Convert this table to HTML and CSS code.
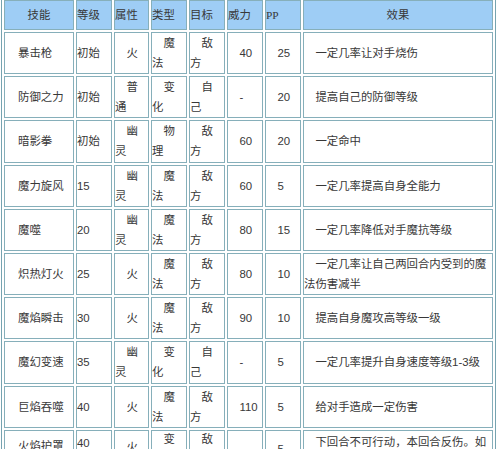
FILE: index.html
```html
<!DOCTYPE html>
<html lang="zh-CN">
<head>
<meta charset="utf-8">
<title>技能表</title>
<link rel="stylesheet" href="styles.css">
</head>
<body>
<table class="skills">
  <thead>
    <tr class="head">
      <th class="c-name center">技能</th>
      <th class="c-lv">等级</th>
      <th class="c-attr">属性</th>
      <th class="c-type">类型</th>
      <th class="c-target">目标</th>
      <th class="c-power">威力</th>
      <th class="c-pp latin">PP</th>
      <th class="c-effect center">效果</th>
    </tr>
  </thead>
  <tbody>
    <tr>
      <td class="name">暴击枪</td><td class="lv">初始</td><td>火</td><td>魔法</td><td>敌方</td><td>40</td><td>25</td><td>一定几率让对手烧伤</td>
    </tr>
    <tr>
      <td class="name">防御之力</td><td class="lv">初始</td><td>普通</td><td>变化</td><td>自己</td><td>-</td><td>20</td><td>提高自己的防御等级</td>
    </tr>
    <tr>
      <td class="name">暗影拳</td><td class="lv">初始</td><td>幽灵</td><td>物理</td><td>敌方</td><td>60</td><td>20</td><td>一定命中</td>
    </tr>
    <tr>
      <td class="name">魔力旋风</td><td class="lv">15</td><td>幽灵</td><td>魔法</td><td>敌方</td><td>60</td><td>5</td><td>一定几率提高自身全能力</td>
    </tr>
    <tr>
      <td class="name">魔噬</td><td class="lv">20</td><td>幽灵</td><td>魔法</td><td>敌方</td><td>80</td><td>15</td><td>一定几率降低对手魔抗等级</td>
    </tr>
    <tr>
      <td class="name">炽热灯火</td><td class="lv">25</td><td>火</td><td>魔法</td><td>敌方</td><td>80</td><td>10</td><td>一定几率让自己两回合内受到的魔法伤害减半</td>
    </tr>
    <tr>
      <td class="name">魔焰瞬击</td><td class="lv">30</td><td>火</td><td>魔法</td><td>敌方</td><td>90</td><td>10</td><td>提高自身魔攻高等级一级</td>
    </tr>
    <tr>
      <td class="name">魔幻变速</td><td class="lv">35</td><td>幽灵</td><td>变化</td><td>自己</td><td>-</td><td>5</td><td>一定几率提升自身速度等级1-3级</td>
    </tr>
    <tr>
      <td class="name">巨焰吞噬</td><td class="lv">40</td><td>火</td><td>魔法</td><td>敌方</td><td>110</td><td>5</td><td>给对手造成一定伤害</td>
    </tr>
    <tr class="last">
      <td class="name p5">火焰护罩</td><td class="lv p2">40</td><td class="p6">火</td><td class="tight">变化</td><td class="tight">敌方</td><td class="p10">-</td><td class="p8">5</td><td class="p1">下回合不可行动，本回合反伤。如</td>
    </tr>
  </tbody>
</table>
</body>
</html>
```

FILE: styles.css
```css
html, body {
  margin: 0;
  padding: 0;
  background: #ffffff;
}

body {
  font-family: "Liberation Sans", "Noto Sans CJK SC", sans-serif;
  font-size: 11.4px;
  color: #383838;
}

.skills {
  table-layout: fixed;
  width: 495px;
  margin: -3px 0 0 1px;
  border: 1px solid #76a3b0;
  border-spacing: 2px;
  background: #ffffff;
}

.skills th,
.skills td {
  box-sizing: border-box;
  border: 1px solid #86afba;
  padding: 0;
  line-height: 20px;
  text-align: left;
  vertical-align: middle;
  font-weight: normal;
  text-indent: 1em;
  overflow: hidden;
}

.skills th {
  background: #9ecdf5;
  text-indent: 0;
}

.skills th.center {
  text-align: center;
}

.skills th.latin {
  font-family: "Liberation Serif", serif;
}

.skills .head {
  height: 30px;
}

.skills tbody tr {
  height: 42.2px;
}

.c-name { width: 70px; }
.c-lv { width: 36px; }
.c-attr { width: 35px; }
.c-type { width: 36px; }
.c-target { width: 36px; }
.c-power { width: 36px; }
.c-pp { width: 36px; }
.c-effect { width: 190px; }

.skills td {
  padding-right: 1px;
}

.skills td.name {
  text-indent: 13px;
}

.skills td.lv {
  text-indent: 0;
}

.skills tr.last {
  height: 64px;
}

.skills tr.last td {
  vertical-align: top;
}

.skills tr.last td.tight {
  line-height: 17px;
}

.skills tr.last .p1 { padding-top: 1px; }
.skills tr.last .p2 { padding-top: 2px; }
.skills tr.last .p5 { padding-top: 5px; }
.skills tr.last .p6 { padding-top: 6px; }
.skills tr.last .p8 { padding-top: 8px; }
.skills tr.last .p10 { padding-top: 10px; }
```
